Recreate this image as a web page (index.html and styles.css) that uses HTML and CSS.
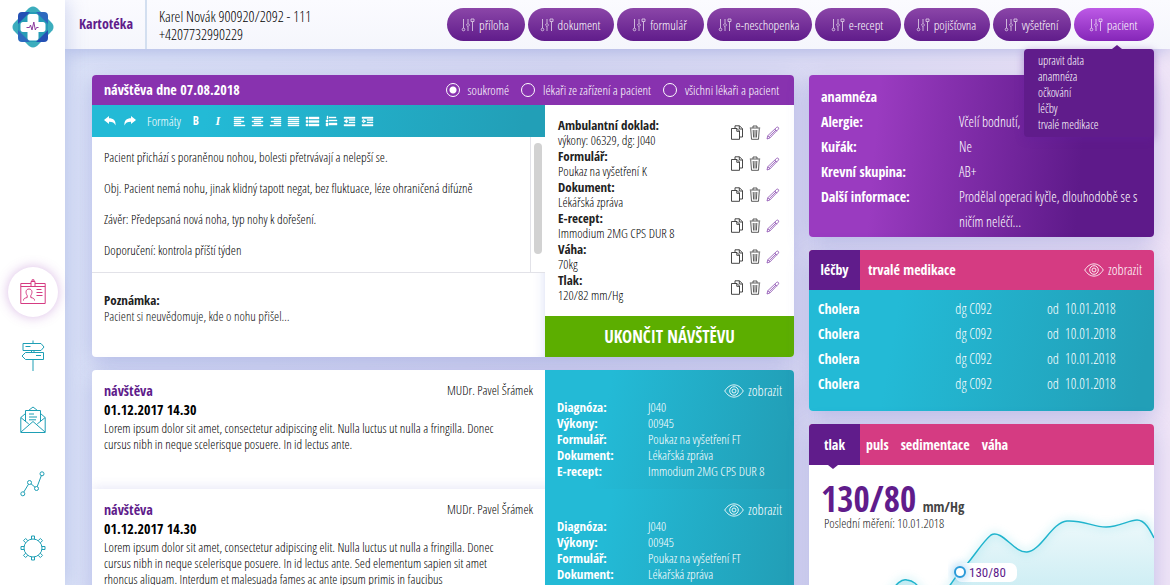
FILE: index.html
```html
<!DOCTYPE html>
<html lang="cs">
<head>
<meta charset="utf-8">
<title>Kartotéka</title>
<link rel="stylesheet" href="styles.css">
</head>
<body>
<svg class="sprite" aria-hidden="true">
  <symbol id="i-sliders" viewBox="0 0 14 14"><g fill="none" stroke="currentColor" stroke-width=".8"><path d="M2.500 1v9M7 1v4.500M7 8.500V13M11.500 4v9"/><circle cx="2.500" cy="11.500" r="1.300"/><path d="M7 5.400 8.600 7 7 8.600 5.400 7z"/><path d="M10 1h3v2.500h-3z"/></g></symbol>
  <symbol id="i-eye" viewBox="0 0 20 14"><g fill="none" stroke="currentColor" stroke-width=".9"><path d="M.7 7C3.500 2.800 6.500.9 10 .9S16.500 2.800 19.300 7c-2.800 4.200-5.800 6.100-9.300 6.100S3.500 11.200.7 7z"/><circle cx="10" cy="7" r="4.300"/><circle cx="10" cy="7" r="2"/></g></symbol>
  <symbol id="i-copy" viewBox="0 0 14 15"><g fill="none" stroke="currentColor" stroke-width=".9"><path d="M5 3.500H1.500v10.800h8V12"/><path d="M5 3.500V.8h4.500l3 3V12h-3V6L7 3.500H5M9.300.8V4h3.200M6.800 3.500V6.300h2.700"/></g></symbol>
  <symbol id="i-trash" viewBox="0 0 12 15"><g fill="none" stroke="currentColor" stroke-width=".8"><path d="M.8 3h10.400M4 2.800V1h4v1.800M1.700 3.500l.8 10.800h7l.8-10.800M4.200 5l.4 7.500M6 5v7.500M7.800 5l-.4 7.500"/></g></symbol>
  <symbol id="i-pencil" viewBox="0 0 14 14"><g fill="none" stroke="currentColor" stroke-width=".8"><path d="M1 13l.8-3.300L10.700 1.300c1-.9 2.600.6 1.800 1.700L4 11.900zM1.800 9.700 4 11.900M8.800 3l2.100 2.200M3.300 10.600 10 4"/></g></symbol>
</svg>
<div class="app">
  <nav class="rail" aria-label="Hlavní">
    <a class="rail__logo" href="#" aria-label="Domů">
      <svg width="42" height="42" viewBox="0 0 42 42">
        <rect x="6" y="6" width="30" height="30" rx="7" fill="#2450b4"/>
        <path d="M21 .5c2.500 0 4 1.500 6 3.500l11 11c2 2 3.500 3.500 3.500 6s-1.500 4-3.500 6L27 38c-2 2-3.500 3.500-6 3.500S17 40 15 38L4 27c-2-2-3.500-3.500-3.500-6S2 17 4 15L15 4c2-2 3.500-3.500 6-3.500z" fill="#27a4b6" fill-opacity=".9"/>
        <path d="M10 6h8L6 18v-8a4 4 0 0 1 4-4zM36 24v8a4 4 0 0 1-4 4h-8z" fill="#2450b4"/>
        <path d="M24 6h8a4 4 0 0 1 4 4v8zM6 24l12 12h-8a4 4 0 0 1-4-4z" fill="#2d6abf"/>
        <path d="M18 8h6c1.500 0 2.500 1 2.500 2.500V16H31c1.500 0 2.500 1 2.500 2.500v5c0 1.500-1 2.500-2.500 2.500h-4.500v6c0 1.500-1 2.500-2.500 2.500h-6c-1.500 0-2.500-1-2.500-2.500v-6H11c-1.500 0-2.500-1-2.500-2.500v-5c0-1.500 1-2.500 2.500-2.500h4.500v-5.500C15.500 9 16.500 8 18 8z" fill="#fff"/>
        <path d="M14.500 21.500h3l1-2.500 1.500 5 1.800-8 1.500 8 1.200-2.500h2" fill="none" stroke="#8a3a9c"/>
      </svg>
    </a>
    <a class="rail__item rail__item--active" href="#" aria-label="Kartotéka">
      <svg width="26" height="26" viewBox="0 0 26 26" fill="none" stroke="currentColor"><path d="M11 4.500H.8v20h24.400v-20H15M.8 7.500H11M15 7.500h10.200M11 2.500h4v5h-4zM12 2.500V.8h2v1.700M16.500 10.500h5M16.500 13.500h6M16.500 16.500h6"/><path d="M3.500 21.500c0-2 1-2.300 3.700-3v-2c-1.800-2.500-1.700-6.500 1.800-6.500s3.600 4 1.800 6.500v2c2.700.7 3.700 1 3.700 3"/></svg>
    </a>
    <a class="rail__item" href="#" aria-label="Rozcestník">
      <svg width="24" height="32" viewBox="0 0 24 32" fill="none" stroke="currentColor"><path d="M12 .5V3M2 3.500h18l3 3.500-3 3.500H2zM4.500 6.500h5M22.500 12.500h-18L1 16l3.500 3.500h18zM15 15.500h5M10.500 10.500v2M13 10.500v2M12 19.500V31"/></svg>
    </a>
    <a class="rail__item" href="#" aria-label="Zprávy">
      <svg width="26" height="28" viewBox="0 0 26 28" fill="none" stroke="currentColor"><path d="M5.500 7.500.8 11.500v15h24.400v-15l-4.700-4M8.500 4.500 13 1l4.500 3.500M.8 11.500l8 6.500M25.200 11.500l-8 6.500M1 26l12-10.500L25 26M5.500 15.500v-11h15v11M9 8h5M9 11h8M9 13.800h7"/></svg>
    </a>
    <a class="rail__item" href="#" aria-label="Statistiky">
      <svg width="25" height="26" viewBox="0 0 25 26" fill="none" stroke="currentColor"><circle cx="2.800" cy="22.800" r="2"/><circle cx="9.500" cy="11.500" r="2"/><circle cx="16.500" cy="17.500" r="2"/><circle cx="22" cy="2.800" r="2"/><path d="m3.800 21 4.700-7.800M11 12.800l4 3.400M17.200 15.600 21.300 4.700"/></svg>
    </a>
    <a class="rail__item" href="#" aria-label="Nastavení">
      <svg width="26" height="26" viewBox="0 0 26 26" fill="none" stroke="currentColor"><circle cx="13" cy="13" r="9"/><path d="M11.500 4V1h3v3M11.500 22v3h3v-3M4 11.500H1v3h3M22 11.500h3v3h-3M5.600 7.800 3.500 5.600l2.100-2.100 2.200 2.100M20.400 7.800l2.100-2.200-2.100-2.100-2.200 2.100M5.600 18.200l-2.100 2.200 2.100 2.100 2.200-2.100M20.400 18.200l2.100 2.200-2.100 2.100-2.200-2.100"/></svg>
    </a>
  </nav>

  <div class="page">
    <header class="top">
      <h1 class="top__title">Kartotéka</h1>
      <p class="top__patient">Karel Novák 900920/2092 - 111<br>+4207732990229</p>
      <div class="actions">
        <button class="pill"><svg class="ic"><use href="#i-sliders"/></svg>příloha</button>
        <button class="pill"><svg class="ic"><use href="#i-sliders"/></svg>dokument</button>
        <button class="pill"><svg class="ic"><use href="#i-sliders"/></svg>formulář</button>
        <button class="pill"><svg class="ic"><use href="#i-sliders"/></svg>e-neschopenka</button>
        <button class="pill"><svg class="ic"><use href="#i-sliders"/></svg>e-recept</button>
        <button class="pill"><svg class="ic"><use href="#i-sliders"/></svg>pojišťovna</button>
        <button class="pill"><svg class="ic"><use href="#i-sliders"/></svg>vyšetření</button>
        <div class="actions__menu">
          <button class="pill pill--active" aria-expanded="true"><svg class="ic"><use href="#i-sliders"/></svg>pacient</button>
          <ul class="menu">
            <li><a href="#">upravit data</a></li>
            <li><a href="#">anamnéza</a></li>
            <li><a href="#">očkování</a></li>
            <li><a href="#">léčby</a></li>
            <li><a href="#">trvalé medikace</a></li>
          </ul>
        </div>
      </div>
    </header>

    <main class="content">
      <div class="col">
        <section class="card">
          <div class="card__bar">
            <h2 class="card__title">návštěva dne 07.08.2018</h2>
            <div class="privacy">
              <label><input type="radio" name="privacy" checked>soukromé</label>
              <label><input type="radio" name="privacy">lékaři ze zařízení a pacient</label>
              <label><input type="radio" name="privacy">všichni lékaři a pacient</label>
            </div>
          </div>
          <div class="split">
            <div class="write">
              <div class="tools">
                <button aria-label="Zpět"><svg width="12" height="10" viewBox="0 0 12 10"><path d="M5 0v2.300c4.500 0 7 2 6.500 7.200C10.500 6.700 8.500 5.800 5 5.800V8L0 4z"/></svg></button>
                <button aria-label="Znovu"><svg width="12" height="10" viewBox="0 0 12 10"><path d="M7 0v2.300C2.500 2.300 0 4.300.5 9.500 1.500 6.700 3.500 5.800 7 5.800V8l5-4z"/></svg></button>
                <button class="tools__text">Formáty</button>
                <button class="tools__glyph tools__bold" aria-label="Tučně">B</button>
                <button class="tools__glyph tools__italic" aria-label="Kurzíva">I</button>
                <span class="tools__group">
                  <button aria-label="Vlevo"><svg width="11" height="9" viewBox="0 0 11 9"><path d="M0 0h10v1H0zM0 2h7v1H0zM0 4h10v1H0zM0 6h7v1H0zM0 8h11v1H0z"/></svg></button>
                  <button aria-label="Na střed"><svg width="11" height="9" viewBox="0 0 11 9"><path d="M0 0h11v1H0zM2 2h7v1H2zM0 4h11v1H0zM2 6h7v1H2zM0 8h11v1H0z"/></svg></button>
                  <button aria-label="Vpravo"><svg width="11" height="9" viewBox="0 0 11 9"><path d="M1 0h10v1H1zM4 2h7v1H4zM1 4h10v1H1zM4 6h7v1H4zM0 8h11v1H0z"/></svg></button>
                  <button aria-label="Do bloku"><svg width="11" height="9" viewBox="0 0 11 9"><path d="M0 0h11v1H0zM0 2h11v1H0zM0 4h11v1H0zM0 6h11v1H0zM0 8h11v1H0z"/></svg></button>
                  <button aria-label="Odrážky"><svg width="13" height="9" viewBox="0 0 13 9"><path d="M0 0h2v2H0zM3 0h10v2H3zM0 3.500h2v2H0zM3 3.500h10v2H3zM0 7h2v2H0zM3 7h10v2H3z"/></svg></button>
                  <button aria-label="Číslování"><svg width="11" height="10" viewBox="0 0 11 10"><path d="M1 0h1v3H1zM0 4h2v2H0zM0 7h2v3H0zM3 1h7v1H3zM3 4h8v1H3zM3 7h8v2H3z"/></svg></button>
                  <button aria-label="Zmenšit odsazení"><svg width="11" height="9" viewBox="0 0 11 9"><path d="M0 0h11v1.500H0zM5 2.500h6v1H5zM5 5h6v1H5zM0 7.500h11V9H0zM0 4.200 3 2.200v4zM2 3.700h2v1H2z"/></svg></button>
                  <button aria-label="Zvětšit odsazení"><svg width="11" height="9" viewBox="0 0 11 9"><path d="M0 0h11v1.500H0zM5 2.500h6v1H5zM5 5h6v1H5zM0 7.500h11V9H0zM4 4.200 1 2.200v4zM0 3.700h2v1H0z"/></svg></button>
                </span>
              </div>
              <div class="editor">
                <textarea class="editor__text" rows="4" aria-label="Zpráva">Pacient přichází s poraněnou nohou, bolesti přetrvávají a nelepší se.
Obj. Pacient nemá nohu, jinak klidný tapott negat, bez fluktuace, léze ohraničená difúzně
Závěr: Předepsaná nová noha, typ nohy k dořešení.
Doporučení: kontrola příští týden</textarea>
                <div class="editor__track"><div class="editor__thumb"></div></div>
              </div>
              <div class="note">
                <label class="note__label" for="note">Poznámka:</label>
                <textarea class="note__text" id="note" rows="2">Pacient si neuvědomuje, kde o nohu přišel…</textarea>
              </div>
            </div>
            <div class="docs">
              <ul class="docs__list">
                <li><div><b>Ambulantní doklad:</b><span>výkony: 06329, dg: J040</span></div><div class="docs__tools"><button aria-label="Kopírovat"><svg class="ic-copy"><use href="#i-copy"/></svg></button><button aria-label="Smazat"><svg class="ic-trash"><use href="#i-trash"/></svg></button><button aria-label="Upravit"><svg class="ic-pencil"><use href="#i-pencil"/></svg></button></div></li>
                <li><div><b>Formulář:</b><span>Poukaz na vyšetření K</span></div><div class="docs__tools"><button aria-label="Kopírovat"><svg class="ic-copy"><use href="#i-copy"/></svg></button><button aria-label="Smazat"><svg class="ic-trash"><use href="#i-trash"/></svg></button><button aria-label="Upravit"><svg class="ic-pencil"><use href="#i-pencil"/></svg></button></div></li>
                <li><div><b>Dokument:</b><span>Lékářská zpráva</span></div><div class="docs__tools"><button aria-label="Kopírovat"><svg class="ic-copy"><use href="#i-copy"/></svg></button><button aria-label="Smazat"><svg class="ic-trash"><use href="#i-trash"/></svg></button><button aria-label="Upravit"><svg class="ic-pencil"><use href="#i-pencil"/></svg></button></div></li>
                <li><div><b>E-recept:</b><span>Immodium 2MG CPS DUR 8</span></div><div class="docs__tools"><button aria-label="Kopírovat"><svg class="ic-copy"><use href="#i-copy"/></svg></button><button aria-label="Smazat"><svg class="ic-trash"><use href="#i-trash"/></svg></button><button aria-label="Upravit"><svg class="ic-pencil"><use href="#i-pencil"/></svg></button></div></li>
                <li><div><b>Váha:</b><span>70kg</span></div><div class="docs__tools"><button aria-label="Kopírovat"><svg class="ic-copy"><use href="#i-copy"/></svg></button><button aria-label="Smazat"><svg class="ic-trash"><use href="#i-trash"/></svg></button><button aria-label="Upravit"><svg class="ic-pencil"><use href="#i-pencil"/></svg></button></div></li>
                <li><div><b>Tlak:</b><span>120/82 mm/Hg</span></div><div class="docs__tools"><button aria-label="Kopírovat"><svg class="ic-copy"><use href="#i-copy"/></svg></button><button aria-label="Smazat"><svg class="ic-trash"><use href="#i-trash"/></svg></button><button aria-label="Upravit"><svg class="ic-pencil"><use href="#i-pencil"/></svg></button></div></li>
              </ul>
              <button class="finish">UKONČIT NÁVŠTĚVU</button>
            </div>
          </div>
        </section>

        <section class="card">
          <article class="split visit">
            <div class="visit__main">
              <div class="visit__head"><h3>návštěva</h3><span class="visit__doctor">MUDr. Pavel Šrámek</span></div>
              <p class="visit__date">01.12.2017 14.30</p>
              <p class="visit__text">Lorem ipsum dolor sit amet, consectetur adipiscing elit. Nulla luctus ut nulla a fringilla. Donec cursus nibh in neque scelerisque posuere. In id lectus ante.</p>
            </div>
            <div class="visit__side">
              <a class="show" href="#"><svg class="ic-eye"><use href="#i-eye"/></svg>zobrazit</a>
              <dl class="facts">
                <dt>Diagnóza:</dt><dd>J040</dd>
                <dt>Výkony:</dt><dd>00945</dd>
                <dt>Formulář:</dt><dd>Poukaz na vyšetření FT</dd>
                <dt>Dokument:</dt><dd>Lékařská zpráva</dd>
                <dt>E-recept:</dt><dd>Immodium 2MG CPS DUR 8</dd>
              </dl>
            </div>
          </article>
          <article class="split visit">
            <div class="visit__main">
              <div class="visit__head"><h3>návštěva</h3><span class="visit__doctor">MUDr. Pavel Šrámek</span></div>
              <p class="visit__date">01.12.2017 14.30</p>
              <p class="visit__text">Lorem ipsum dolor sit amet, consectetur adipiscing elit. Nulla luctus ut nulla a fringilla. Donec cursus nibh in neque scelerisque posuere. In id lectus ante. Sed elementum sapien sit amet rhoncus aliquam. Interdum et malesuada fames ac ante ipsum primis in faucibus</p>
            </div>
            <div class="visit__side">
              <a class="show" href="#"><svg class="ic-eye"><use href="#i-eye"/></svg>zobrazit</a>
              <dl class="facts">
                <dt>Diagnóza:</dt><dd>J040</dd>
                <dt>Výkony:</dt><dd>00945</dd>
                <dt>Formulář:</dt><dd>Poukaz na vyšetření FT</dd>
                <dt>Dokument:</dt><dd>Lékařská zpráva</dd>
                <dt>E-recept:</dt><dd>Immodium 2MG CPS DUR 8</dd>
              </dl>
            </div>
          </article>
        </section>
      </div>

      <div class="col col--side">
        <section class="card history">
          <h2>anamnéza</h2>
          <dl class="history__list">
            <dt>Alergie:</dt><dd>Včelí bodnutí,</dd>
            <dt>Kuřák:</dt><dd>Ne</dd>
            <dt>Krevní skupina:</dt><dd>AB+</dd>
            <dt>Další informace:</dt><dd>Prodělal operaci kyčle, dlouhodobě se s ničím neléčí…</dd>
          </dl>
        </section>

        <section class="card">
          <div class="tabs">
            <button class="tab tab--active">léčby</button>
            <button class="tab">trvalé medikace</button>
            <a class="show tabs__show" href="#"><svg class="ic-eye"><use href="#i-eye"/></svg>zobrazit</a>
          </div>
          <div class="cures">
            <table>
              <tr><th scope="row">Cholera</th><td>dg C092</td><td>od &nbsp;10.01.2018</td></tr>
              <tr><th scope="row">Cholera</th><td>dg C092</td><td>od &nbsp;10.01.2018</td></tr>
              <tr><th scope="row">Cholera</th><td>dg C092</td><td>od &nbsp;10.01.2018</td></tr>
              <tr><th scope="row">Cholera</th><td>dg C092</td><td>od &nbsp;10.01.2018</td></tr>
            </table>
          </div>
        </section>

        <section class="card">
          <div class="tabs tabs--tight">
            <button class="tab tab--active tab--pointer">tlak</button>
            <button class="tab">puls</button>
            <button class="tab">sedimentace</button>
            <button class="tab">váha</button>
          </div>
          <div class="vital">
            <div class="vital__info">
              <p class="vital__value"><strong>130/80</strong> mm/Hg</p>
              <p class="vital__date">Poslední měření: 10.01.2018</p>
            </div>
            <svg class="vital__chart" viewBox="0 0 345 160">
              <defs>
                <linearGradient id="area" x1="0" y1="0" x2="0" y2="1"><stop offset="0" stop-color="#1fb0cc" stop-opacity=".08"/><stop offset="1" stop-color="#1fb0cc" stop-opacity=".3"/></linearGradient>
                <filter id="glow" x="-20%" y="-60%" width="140%" height="220%"><feGaussianBlur stdDeviation="4"/></filter>
              </defs>
              <path d="M70 140C82 128 90 112 98 115c14 1 14 20 28 18 12-4 15-15 25-26 12-12 22-30 31-37 11-6 23 18 36 17 14-1 25-30 40-31 16-1 26 6 39 6s27-7 36-7 9 10 12 18v90H70z" fill="url(#area)"/>
              <path d="M70 140C82 128 90 112 98 115c14 1 14 20 28 18 12-4 15-15 25-26 12-12 22-30 31-37 11-6 23 18 36 17 14-1 25-30 40-31 16-1 26 6 39 6s27-7 36-7 9 10 12 18" fill="none" stroke="#6fd6e6" stroke-width="3" opacity=".5" filter="url(#glow)"/>
              <path d="M70 140C82 128 90 112 98 115c14 1 14 20 28 18 12-4 15-15 25-26 12-12 22-30 31-37 11-6 23 18 36 17 14-1 25-30 40-31 16-1 26 6 39 6s23-7 31-7 13 10 17 18" fill="none" stroke="#20b4cd" stroke-width="1.500"/>
              <rect x="146" y="98" width="62" height="19" rx="7" fill="#fff"/>
              <circle cx="151" cy="107" r="8" fill="#4aa8e8" opacity=".4" filter="url(#glow)"/>
              <circle cx="151" cy="107" r="5" fill="#fff" stroke="#2a9ad8" stroke-width="2"/>
              <text class="vital__tip" x="160" y="112">130/80</text>
            </svg>
          </div>
        </section>
      </div>
    </main>
  </div>
</div>
</body>
</html>
```
FILE: styles.css
```css
:root {
  --light: "Open Sans Condensed Light", "Roboto Condensed", sans-serif;
  --regular: "Roboto Condensed", "Liberation Sans", sans-serif;
  --bold: "Open Sans Condensed", "Roboto Condensed", sans-serif;
  --purple: #601c8b;
  --pink: #d53b82;
  --teal: linear-gradient(100deg, #23bad6 25%, #229fb7 95%);
}

* { box-sizing: border-box; margin: 0; padding: 0; }

body { font-family: var(--light); font-size: 13px; line-height: 16px; color: #000; }
ul { list-style: none; }
a { color: inherit; text-decoration: none; }
button { border: 0; background: none; color: inherit; font: inherit; cursor: pointer; }
textarea { display: block; width: 100%; border: 0; resize: none; outline: 0; background: none; overflow: hidden; }
h1, h2, h3, b, strong, th, dt { font-family: var(--bold); font-weight: 700; }
svg { display: block; flex: none; }
.sprite { display: none; }

.app { display: flex; height: 100vh; overflow: hidden; }

.rail { position: relative; z-index: 2; width: 65px; flex: none; display: flex; flex-direction: column; align-items: center; background: #fff; color: #1e9fb5; box-shadow: 0 0 20px rgba(120, 140, 210, .4); }
.rail__logo { flex: none; padding-top: 6px; margin-bottom: 219px; }
.rail__item { flex: none; width: 50px; height: 50px; margin-bottom: 14px; display: grid; place-items: center; border-radius: 50%; }
.rail__item--active { color: var(--pink); background: #fff; box-shadow: 0 0 12px rgba(150, 60, 180, .35); }

.page { flex: 1; min-width: 0; display: flex; flex-direction: column; background: linear-gradient(90deg, #dbe2f7 0%, #d6d8f2 45%, #dcdcf4 65%, #f0e5f7 100%); }

.top { position: relative; z-index: 1; display: flex; align-items: stretch; height: 49px; padding-right: 16px; background: linear-gradient(#fbfbff, #f5f6fc); box-shadow: 0 2px 18px rgba(120, 135, 210, .45); }
.top__title { width: 82px; padding-left: 14px; border-right: 2px solid #d3dff0; font-size: 14px; line-height: 48px; color: var(--purple); }
.top__patient { flex: 1; padding: 7px 0 0 12px; font-size: 15px; line-height: 18px; white-space: nowrap; }

.actions { display: grid; grid-template-columns: 78px 86px 87px 105px 86px 86px 78px 80px; gap: 3px; padding-top: 8px; }
.actions__menu { position: relative; }
.pill { display: flex; align-items: center; justify-content: center; gap: 4px; width: 100%; height: 33px; padding-right: 2px; border-radius: 17px; background: linear-gradient(#8b46a8, #601c8b); color: #fff; white-space: nowrap; }
.pill--active { background: linear-gradient(#bd5ae6, #8526b8); }
.ic { width: 14px; height: 14px; opacity: .8; }
.menu { position: absolute; top: 41px; right: 0; width: 130px; padding: 4px 14px; border-radius: 4px; background: var(--purple); color: #fff; font-size: 12px; box-shadow: 0 2px 8px rgba(100, 30, 160, .4); }
.menu::before { content: ""; position: absolute; top: -4px; right: 32px; border: solid transparent; border-width: 0 5px 4px; border-bottom-color: var(--purple); }
.menu a { display: block; }

.content { flex: 1; min-height: 0; overflow: hidden; display: grid; grid-template-columns: 702fr 345fr; gap: 15px; padding: 26px 16px 0 27px; align-items: start; }
.col { display: flex; flex-direction: column; gap: 13px; min-width: 0; }
.card { border-radius: 4px; overflow: hidden; background: #fff; box-shadow: 0 6px 22px rgba(100, 110, 200, .32); }

.card__bar { display: flex; justify-content: space-between; align-items: center; height: 30px; padding: 0 15px 0 12px; background: #8832af; color: #fff; }
.card__title { font-size: 14px; }
.privacy { display: flex; gap: 12px; }
.privacy label { display: flex; align-items: center; gap: 8px; }
.privacy input { appearance: none; width: 14px; height: 14px; border: 1px solid #fff; border-radius: 50%; }
.privacy input:checked { background: radial-gradient(circle, #fff 3px, transparent 4px); }

.split { display: grid; grid-template-columns: 453fr 249fr; }
.write { display: flex; flex-direction: column; min-width: 0; box-shadow: inset -12px 0 12px -12px rgba(120, 140, 220, .3); }
.tools { display: flex; align-items: center; gap: 8px; height: 32px; padding-left: 12px; background: var(--teal); color: #fff; fill: #fff; }
.tools__text { padding: 0 3px; }
.tools__glyph { width: 8px; font-family: var(--bold); font-size: 12px; font-weight: 700; }
.tools__italic { margin-left: 6px; font-family: "Liberation Serif", serif; font-style: italic; }
.tools__group { display: flex; gap: 7px; padding-left: 4px; }
.tools__group svg { stroke: #fff; stroke-width: .4; overflow: visible; }

.editor { display: flex; border-bottom: 1px solid #e2e2e8; background: #fff; }
.editor__text { padding: 5px 12px 6px; font-family: var(--light); font-size: 13px; line-height: 31px; color: #000; white-space: pre; }
.editor__track { flex: none; width: 15px; padding: 6px 3px 18px; border-left: 1px solid #e2e2e8; }
.editor__thumb { height: 100%; border-radius: 4px; background: #d2d2d2; }
.note { flex: 1; padding: 19px 12px 0; }
.note__label { display: block; font-family: var(--bold); font-weight: 700; color: #222; }
.note__text { font-family: var(--light); font-size: 13px; line-height: 16px; color: #111; }

.docs { display: flex; flex-direction: column; }
.docs__list { padding: 12px 14px 13px 13px; }
.docs__list li { display: flex; justify-content: space-between; align-items: center; height: 31px; }
.docs__list b, .docs__list span { display: block; }
.docs__list b { color: #222; }
.docs__list span { line-height: 15px; }
.docs__tools { display: flex; align-items: center; gap: 5px; color: #333; }
.ic-copy { width: 14px; height: 15px; }
.ic-trash { width: 12px; height: 15px; }
.ic-pencil { width: 14px; height: 14px; color: #8a4cb0; }
.finish { height: 41px; background: #5cae00; color: #fff; font-family: var(--bold); font-size: 17px; font-weight: 700; }

.visit { min-height: 119px; }
.visit + .visit { box-shadow: 0 -2px 10px rgba(120, 120, 210, .16); }
.visit__main { padding: 12px 12px 8px; }
.visit__head { display: flex; justify-content: space-between; }
.visit h3 { font-size: 14px; line-height: 18px; color: var(--purple); }
.visit__date { font-family: var(--bold); font-size: 14px; line-height: 20px; font-weight: 700; }
.visit__text { max-width: 400px; }
.visit__side { padding: 13px 12px 8px; background: var(--teal); color: #fff; }
.show { display: flex; align-items: center; justify-content: flex-end; gap: 4px; font-size: 14px; }
.ic-eye { width: 20px; height: 14px; }
.facts { display: grid; grid-template-columns: 91px 1fr; }

.history { padding: 9px 12px 3px; background: linear-gradient(95deg, #9a3bc0 20%, #5e1a8a 78%); color: #fff; font-size: 14px; line-height: 25px; }
.history h2 { font-size: 14px; }
.history__list { display: grid; grid-template-columns: 138px 1fr; }

.tabs { display: flex; align-items: stretch; height: 40px; background: var(--pink); color: #fff; }
.tab { padding: 0 8px; font-family: var(--bold); font-size: 14px; font-weight: 700; }
.tabs--tight .tab { padding: 0 6px; }
.tab--active { width: 51px; background: var(--purple); }
.tab--pointer { position: relative; }
.tab--pointer::after { content: ""; position: absolute; z-index: 1; top: 100%; left: 19px; border: solid transparent; border-width: 4px 5px 0; border-top-color: var(--purple); }
.tabs__show { margin-left: auto; padding-right: 12px; }
.tabs--tight { height: 41px; }
.cures { padding: 6px 9px 15px; background: var(--teal); color: #fff; }
.cures table { width: 100%; border-collapse: collapse; table-layout: fixed; font-size: 14px; line-height: 25px; text-align: left; }
.cures th { width: 42%; }
.cures td:nth-child(2) { width: 28%; }

.vital { display: grid; }
.vital > * { grid-area: 1 / 1; }
.vital__info { position: relative; padding: 18px 12px; }
.vital__value { font-family: var(--bold); font-weight: 700; font-size: 14px; line-height: 16px; color: #444; }
.vital__value strong { margin-right: 3px; font-size: 35px; line-height: 32px; color: var(--purple); }
.vital__date { padding-left: 3px; line-height: 16px; color: #222; }
.vital__chart { width: 100%; height: auto; }
.vital__tip { font-family: var(--regular); font-size: 13px; fill: var(--purple); }
```
